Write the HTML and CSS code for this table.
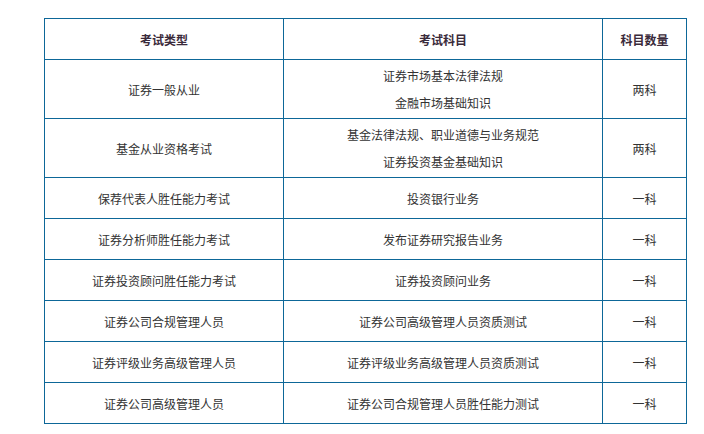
FILE: index.html
```html
<!DOCTYPE html>
<html lang="zh-CN">
<head>
<meta charset="utf-8">
<link rel="stylesheet" href="styles.css">
</head>
<body>
<table class="exam">
  <colgroup>
    <col class="c1"><col class="c2"><col class="c3">
  </colgroup>
  <thead>
    <tr><th>考试类型</th><th>考试科目</th><th>科目数量</th></tr>
  </thead>
  <tbody>
    <tr class="two"><td>证券一般从业</td><td><p>证券市场基本法律法规</p><p>金融市场基础知识</p></td><td>两科</td></tr>
    <tr class="two"><td>基金从业资格考试</td><td><p>基金法律法规、职业道德与业务规范</p><p>证券投资基金基础知识</p></td><td>两科</td></tr>
    <tr><td>保荐代表人胜任能力考试</td><td>投资银行业务</td><td>一科</td></tr>
    <tr><td>证券分析师胜任能力考试</td><td>发布证券研究报告业务</td><td>一科</td></tr>
    <tr><td>证券投资顾问胜任能力考试</td><td>证券投资顾问业务</td><td>一科</td></tr>
    <tr><td>证券公司合规管理人员</td><td>证券公司高级管理人员资质测试</td><td>一科</td></tr>
    <tr><td>证券评级业务高级管理人员</td><td>证券评级业务高级管理人员资质测试</td><td>一科</td></tr>
    <tr><td>证券公司高级管理人员</td><td>证券公司合规管理人员胜任能力测试</td><td>一科</td></tr>
  </tbody>
</table>
</body>
</html>
```
FILE: styles.css
```css
html, body {
  margin: 0;
  padding: 0;
  background: #ffffff;
}
body {
  padding: 18px 0 0 44px;
  font-family: "Noto Sans CJK SC", "Noto Sans", sans-serif;
  font-size: 12px;
  color: #333333;
}
.exam {
  border-collapse: collapse;
  table-layout: fixed;
  width: 643px;
}
.c1 { width: 239px; }
.c2 { width: 319px; }
.c3 { width: 84px; }
.exam th, .exam td {
  border: 1px solid #0d6798;
  text-align: center;
  vertical-align: middle;
  padding: 0;
  height: 40px;
  line-height: 27px;
}
.exam th {
  font-weight: bold;
  color: #3a2a3a;
}
.exam tr.two td {
  height: 58px;
}
.exam p {
  margin: 0;
}
```
